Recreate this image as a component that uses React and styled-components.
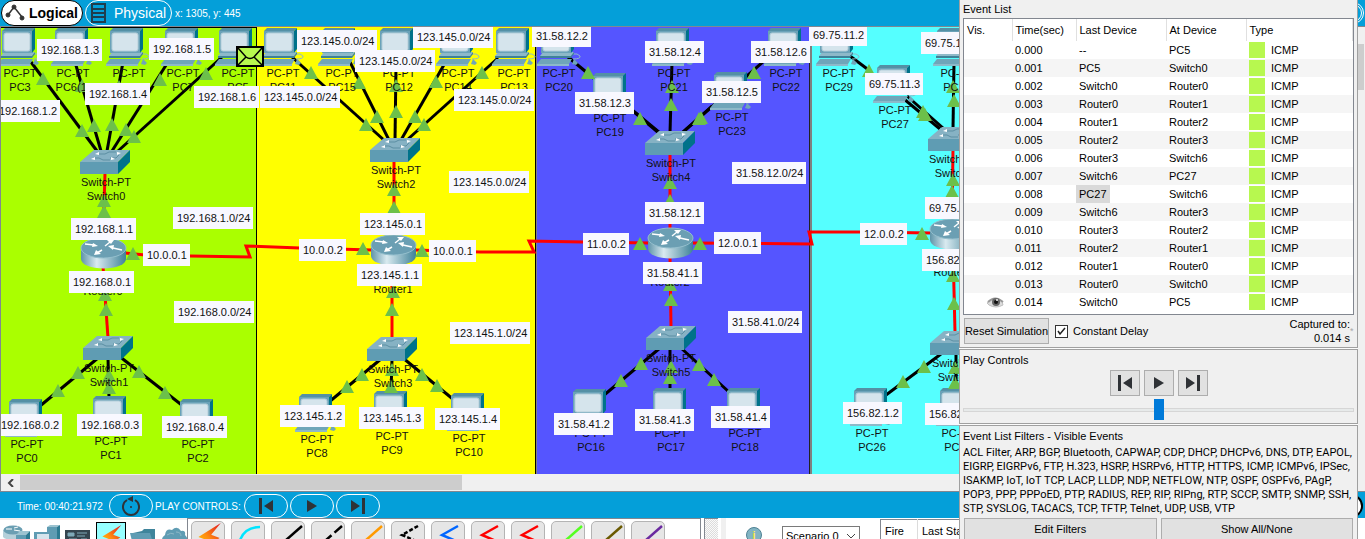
import React from "react";
import styled, { createGlobalStyle } from "styled-components";

const GlobalStyle = createGlobalStyle`
  *, *::before, *::after { box-sizing: border-box; }
  body { margin: 0; background: #f0f0f0; }
  body, button, select, input, table {
    font-family: "Liberation Sans", Arial, sans-serif;
    font-size: 11px;
    color: #000;
  }
  button { padding: 0; cursor: pointer; }
`;

/* ---------- shell ---------- */

const Shell = styled.div`
  position: relative;
  display: flex;
  flex-direction: column;
  height: 100vh;
  overflow: hidden;
`;

const TopBar = styled.header`
  flex: none;
  display: flex;
  align-items: center;
  gap: 2px;
  height: 26px;
  padding: 0 1px;
  background: #049fd9;
`;

const ModeButton = styled.button`
  display: flex;
  align-items: center;
  gap: ${(p) => (p.$active ? "4px" : "8px")};
  height: 26px;
  width: ${(p) => (p.$active ? "82px" : "87px")};
  padding-left: ${(p) => (p.$active ? "3px" : "5px")};
  white-space: nowrap;
  border: 1px solid ${(p) => (p.$active ? "#000" : "#fff")};
  border-radius: 13px;
  background: ${(p) => (p.$active ? "#fff" : "transparent")};
  color: ${(p) => (p.$active ? "#000" : "#fff")};
  font-size: 14px;
  font-weight: ${(p) => (p.$active ? "bold" : "normal")};
`;

const BarText = styled.span`
  color: #fff;
  font-size: 10px;
  white-space: nowrap;
`;

const Coordinates = styled(BarText)`
  padding-left: 1px;
`;

const ClockButton = styled.button`
  width: 32px;
  height: 22px;
  margin-left: auto;
  border: 3px double #fff;
  border-radius: 11px;
  background: transparent;
`;

/* ---------- workspace ---------- */

const Middle = styled.div`
  flex: 1;
  min-height: 0;
  display: flex;
  border-top: 1px solid #828790;
  border-left: 1px solid #828790;
`;

const Viewport = styled.main`
  position: relative;
  flex: 1;
  overflow: hidden;
`;

const Zones = styled.div`
  display: flex;
  height: 100%;
`;

const Zone = styled.section`
  flex: ${(p) => (p.$width ? `0 0 ${p.$width}px` : "1")};
  background: ${(p) => p.$color};
  border-right: ${(p) => p.$edge || "none"};
  border-left: ${(p) => p.$start || "none"};
  border-top: 1px solid ${(p) => p.$top || p.$color};
`;

const Scene = styled.div`
  position: absolute;
  left: -1px;
  top: -27px;
  width: 1400px;
  height: 600px;
`;

const Drawing = styled.svg`
  display: block;
  width: 100%;
  height: 100%;
`;

const NodeName = styled.div`
  position: absolute;
  left: ${(p) => p.$x}px;
  top: ${(p) => p.$y}px;
  width: 80px;
  margin-left: -40px;
  text-align: center;
  line-height: 14px;
  white-space: pre-line;
  color: #111;
`;

const Note = styled.div`
  position: absolute;
  left: ${(p) => p.$x}px;
  top: ${(p) => p.$y}px;
  height: 22px;
  padding: 0 3px 0 4px;
  line-height: 22px;
  white-space: nowrap;
  background: #f8f8ff;
  color: #111;
`;

const VerticalScroll = styled.div`
  flex: none;
  width: 17px;
  padding-top: 17px;
  background: #f0f0f0;
  border-left: 1px solid #fff;
`;

const VerticalThumb = styled.div`
  width: 15px;
  height: 46px;
  background: #cdcdcd;
`;

const HorizontalScroll = styled.div`
  flex: none;
  display: flex;
  height: 18px;
  border: solid #828790;
  border-width: 0 0 1px 1px;
  background: #f0f0f0;
`;

const ScrollArrow = styled.button`
  display: flex;
  align-items: center;
  justify-content: center;
  width: 19px;
  border: 0;
  background: transparent;
`;

const HorizontalThumb = styled.div`
  width: 442px;
  height: 15px;
  margin-top: 1px;
  background: #cdcdcd;
`;

/* ---------- time bar ---------- */

const TimeBar = styled.div`
  flex: none;
  display: flex;
  align-items: center;
  gap: 2px;
  height: 26px;
  padding: 2px 2px 0 17px;
  background: #049fd9;
`;

const TimeText = styled(BarText)`
  width: 90px;
`;

const PlayText = styled(BarText)`
  width: 87px;
`;

const PillButton = styled.button`
  display: flex;
  align-items: center;
  justify-content: center;
  width: 44px;
  height: 24px;
  border: 1px solid #fff;
  border-radius: 12px;
  background: transparent;
`;

const SimulationButton = styled.button`
  height: 24px;
  width: 110px;
  margin-left: auto;
  border: 2px solid #000;
  border-radius: 12px;
  background: #fff;
  font-size: 14px;
  font-weight: bold;
`;

/* ---------- bottom palettes ---------- */

const Bottom = styled.footer`
  flex: none;
  display: flex;
  height: 21px;
  background: #fff;
`;

const Categories = styled.div`
  display: flex;
  gap: 4px;
  width: 187px;
  padding: 4px 0 0 3px;
  border-top: 2px solid #f0f0f0;
`;

const CategoryButton = styled.button`
  width: ${(p) => (p.$active ? "30px" : "27px")};
  height: 30px;
  flex: none;
  margin-top: ${(p) => (p.$active ? "-2px" : "0")};
  border: ${(p) => (p.$active ? "1px solid #000" : "0")};
  background: ${(p) => (p.$active ? "#96ffff" : "transparent")};

  svg { display: block; }
`;

const Connections = styled.div`
  display: flex;
  gap: 6px;
  width: 514px;
  padding: 2px 3px;
  border: solid #828790;
  border-width: 1px 1px 0 1px;
`;

const ConnectionButton = styled.button`
  flex: none;
  width: 34px;
  height: 34px;
  border: 1px solid #b4b4b4;
  border-radius: 5px;
  background: #e6e6e6;

  svg { display: block; }
`;

const Splitter = styled.div`
  width: 14px;
  margin: 0 3px;
  border: 1px solid #828790;
  border-width: 1px 0 0 1px;
  background: repeating-conic-gradient(#dcdcdc 0% 25%, #fafafa 0% 50%) 0 0 / 2px 2px;
`;

const Scenarios = styled.div`
  display: flex;
  align-items: flex-start;
  flex: 1;
  padding-left: 20px;
  border-left: 5px solid #f0f0f0;
`;

const InfoButton = styled.button`
  width: 16px;
  height: 16px;
  margin: 9px 20px 0 0;
  border: 1px solid #4f8294;
  border-radius: 8px;
  background: #82b4c3;
  color: #ffe84a;
  font-weight: bold;
  line-height: 14px;
`;

const SelectBox = styled.label`
  position: relative;
  width: 78px;
  margin: 8px 20px 0 0;

  svg { position: absolute; right: 4px; top: 6px; pointer-events: none; }
`;

const ScenarioSelect = styled.select`
  width: 100%;
  height: 20px;
  padding: 0 3px;
  appearance: none;
  border: 1px solid #7a7a7a;
  border-radius: 0;
  background: #fff;
`;

const PduTable = styled.table`
  margin-top: 1px;
  border-collapse: collapse;
  border: 1px solid #828790;

  th {
    height: 23px;
    padding: 0 4px;
    border-right: 1px solid #dcdcdc;
    text-align: left;
    font-weight: normal;
    white-space: nowrap;
  }

  th:first-child { width: 37px; }
`;

/* ---------- simulation panel ---------- */

const Panel = styled.aside`
  position: absolute;
  top: 0;
  right: 7px;
  bottom: 0;
  display: flex;
  flex-direction: column;
  gap: 1px;
  width: 399px;
  overflow: hidden;
  background: #fcfcfc;
`;

const Group = styled.section`
  flex: none;
  padding: 0 3px;
  border: 1px solid #a0a0a0;
  border-top-width: ${(p) => (p.$first ? "0" : "1px")};
  background: #f0f0f0;
`;

const GroupTitle = styled.h2`
  margin: 0;
  height: ${(p) => (p.$first ? "18px" : "20px")};
  line-height: ${(p) => (p.$first ? "18px" : "20px")};
  font-size: 11px;
  font-weight: normal;
`;

const TableFrame = styled.div`
  height: 297px;
  border: 1px solid #828790;
  background: #fff;
`;

const EventTable = styled.table`
  width: 100%;
  table-layout: fixed;
  border-collapse: collapse;

  th {
    height: 22px;
    padding: 0 0 0 3px;
    border-right: 1px solid #e0e0e0;
    text-align: left;
    font-weight: normal;
  }

  td {
    height: 18px;
    padding: 0 0 0 3px;
    line-height: 18px;
  }

  tbody tr:nth-child(even) { background: #f5f5f5; }
`;

const Selected = styled.span`
  display: inline-block;
  height: 18px;
  margin-left: -3px;
  padding: 0 3px;
  vertical-align: top;
  background: #d9d9d9;
`;

const TypeCell = styled.div`
  display: flex;
  align-items: center;
  gap: 6px;
`;

const Swatch = styled.span`
  width: 16px;
  height: 16px;
  background: #b7f84f;
`;

const EyeBox = styled.div`
  display: flex;
  justify-content: flex-end;
  padding-right: 8px;
`;

const CaptureRow = styled.div`
  display: flex;
  align-items: center;
  height: 32px;
  padding-left: 1px;
`;

const PlainButton = styled.button`
  display: flex;
  align-items: center;
  justify-content: center;
  width: ${(p) => (p.$width ? `${p.$width}px` : "auto")};
  flex: ${(p) => (p.$width ? "none" : "1")};
  height: 26px;
  border: 1px solid #adadad;
  background: #e1e1e1;
  white-space: nowrap;
`;

const DelayLabel = styled.label`
  display: flex;
  align-items: center;
  gap: 5px;
  margin-left: 6px;
`;

const CheckBox = styled.input`
  appearance: none;
  width: 13px;
  height: 13px;
  margin: 0;
  border: 1px solid #333;
  background: #fff;
`;

const CheckWrap = styled.span`
  display: grid;

  > * { grid-area: 1 / 1; }
  svg { pointer-events: none; visibility: hidden; }
  input:checked + svg { visibility: visible; }
`;

const Captured = styled.div`
  margin-left: auto;
  line-height: 14px;
  text-align: right;
`;

const BusyMark = styled.span`
  width: 4px;
  color: #a8a8a8;
  font-size: 9px;
`;

const Transport = styled.div`
  display: flex;
  justify-content: center;
  gap: 4px;
`;

const Speed = styled.input`
  display: block;
  appearance: none;
  width: 100%;
  height: 21px;
  margin: 3px 0;
  background: transparent;

  &::-webkit-slider-runnable-track {
    height: 4px;
    border: 1px solid #d6d6d6;
    background: #e7eaea;
  }

  &::-webkit-slider-thumb {
    appearance: none;
    width: 10px;
    height: 21px;
    margin-top: -10px;
    background: #007ad9;
  }
`;

const FilterList = styled.p`
  margin: 0;
  font-family: Roboto, "Liberation Sans", sans-serif;
  line-height: 14px;
  white-space: pre;
`;

const FilterButtons = styled.div`
  display: flex;
  gap: 4px;
  padding: 2px 1px 4px;

  button { height: 22px; }
`;

/* ---------- data ---------- */

const pcs = [
  [2, 28], [55, 28], [110, 28], [165, 28], [219, 28],
  [264, 28], [322, 28], [380, 28], [440, 28], [496, 28],
  [541, 28], [656, 28], [768, 28], [593, 73], [714, 72],
  [820, 28], [877, 65], [937, 28],
  [9, 399], [93, 396], [180, 399],
  [299, 394], [374, 391], [451, 393],
  [573, 389], [653, 388], [727, 388],
  [854, 388], [940, 388],
];

const switches = [
  [80, 150], [370, 138], [645, 131], [928, 127],
  [83, 336], [367, 337], [646, 326], [930, 331],
];

const routers = [[81, 238], [371, 235], [648, 228], [930, 219]];

const names = [
  ["PC-PT", "PC3", 20, 66], ["PC-PT", "PC6(1)", 73, 66], ["PC-PT", "PC4", 129, 66],
  ["PC-PT", "PC7", 183, 66], ["PC-PT", "PC5", 238, 66],
  ["PC-PT", "PC11", 283, 66], ["PC-PT", "PC15", 342, 66], ["PC-PT", "PC12", 399, 66],
  ["PC-PT", "PC14", 458, 66], ["PC-PT", "PC13", 514, 66],
  ["PC-PT", "PC20", 559, 66], ["PC-PT", "PC21", 674, 66], ["PC-PT", "PC22", 786, 66],
  ["PC-PT", "PC19", 610, 111], ["PC-PT", "PC23", 732, 110],
  ["PC-PT", "PC29", 839, 66], ["PC-PT", "PC27", 895, 103], ["PC-PT", "PC30", 957, 66],
  ["Switch-PT", "Switch0", 106, 175], ["Switch-PT", "Switch2", 396, 163],
  ["Switch-PT", "Switch4", 671, 156], ["Switch-PT", "Switch6", 954, 152],
  ["", "Router0", 103, 284], ["", "Router1", 393, 282],
  ["", "Router2", 670, 275], ["", "Router3", 953, 265],
  ["Switch-PT", "Switch1", 109, 361], ["Switch-PT", "Switch3", 393, 362],
  ["Switch-PT", "Switch5", 671, 351], ["Switch-PT", "Switch7", 957, 356],
  ["PC-PT", "PC0", 27, 437], ["PC-PT", "PC1", 111, 434], ["PC-PT", "PC2", 198, 437],
  ["PC-PT", "PC8", 317, 432], ["PC-PT", "PC9", 392, 429], ["PC-PT", "PC10", 469, 431],
  ["PC-PT", "PC16", 591, 426], ["PC-PT", "PC17", 671, 426], ["PC-PT", "PC18", 745, 426],
  ["PC-PT", "PC26", 872, 426], ["PC-PT", "PC31", 958, 426],
];

const notes = [
  ["192.168.1.3", 37, 39], ["192.168.1.5", 149, 38], ["192.168.1.4", 85, 83],
  ["192.168.1.6", 194, 86], ["192.168.1.2", -5, 100], ["192.168.1.1", 71, 218],
  ["192.168.1.0/24", 173, 207], ["192.168.0.1", 69, 271], ["192.168.0.0/24", 174, 301],
  ["10.0.0.1", 143, 244], ["192.168.0.2", -3, 414], ["192.168.0.3", 77, 414],
  ["192.168.0.4", 162, 416],
  ["123.145.0.0/24", 297, 30], ["123.145.0.0/24", 413, 26], ["123.145.0.0/24", 355, 50],
  ["123.145.0.0/24", 260, 86], ["123.145.0.0/24", 454, 89], ["123.145.0.0/24", 449, 171],
  ["123.145.0.1", 360, 213], ["10.0.0.2", 299, 239], ["10.0.0.1", 429, 240],
  ["123.145.1.1", 357, 264], ["123.145.1.0/24", 450, 322],
  ["123.145.1.2", 280, 405], ["123.145.1.3", 359, 407], ["123.145.1.4", 435, 408],
  ["31.58.12.2", 532, 25], ["31.58.12.4", 645, 41], ["31.58.12.6", 751, 41],
  ["31.58.12.3", 575, 92], ["31.58.12.5", 702, 81], ["31.58.12.0/24", 732, 162],
  ["31.58.12.1", 645, 202], ["11.0.0.2", 583, 233], ["12.0.0.1", 714, 232],
  ["31.58.41.1", 643, 262], ["31.58.41.0/24", 728, 311],
  ["31.58.41.2", 554, 413], ["31.58.41.3", 635, 409], ["31.58.41.4", 711, 406],
  ["69.75.11.2", 809, 24], ["69.75.11.4", 921, 32], ["69.75.11.3", 865, 73],
  ["69.75.11.1", 925, 197], ["12.0.0.2", 860, 223], ["156.82.1.1", 922, 249],
  ["156.82.1.2", 843, 402], ["156.82.1.3", 925, 403],
];

const copper = [
  "31,62 97,151", "75,62 101,151", "123,62 107,151", "168,62 112,151", "222,57 118,151",
  "292,57 385,141", "350,62 389,140", "396,66 395,140", "445,63 401,140", "498,58 407,140",
  "568,57 660,133", "620,100 660,134", "672,62 670,133", "765,60 682,133", "712,106 683,132",
  "850,56 870,71", "907,96 943,128", "904,99 940,129", "954,62 953,129",
  "98,358 40,406", "108,358 109,398", "119,356 183,406",
  "381,359 329,402", "392,360 391,392", "403,358 454,400",
  "660,348 603,396", "670,350 670,390", "681,348 729,392",
  "941,354 886,395", "956,354 956,390",
];

const serial = [
  "105,173 103,240", "103,266 108,338", "394,161 394,237", "392,262 392,339",
  "670,154 670,230", "670,257 671,328", "953,150 952,221", "953,248 955,332",
  "125,253 145,255 190,256 250,257 246,246 300,248 372,250",
  "415,250 480,252 534,252 529,241 583,242 650,243",
  "692,243 812,244 809,232 860,232 932,233",
];

const lights = [
  [43, 79], [82, 131], [82, 86], [94, 126], [119, 87], [112, 125], [160, 80], [126, 130],
  [206, 74], [134, 137], [104, 201], [104, 212], [105, 295], [106, 310], [133, 254],
  [78, 373], [58, 391], [109, 376], [109, 388], [139, 372], [165, 393],
  [311, 73], [366, 125], [359, 83], [377, 117], [396, 86], [396, 112], [436, 82],
  [415, 117], [482, 73], [424, 125], [394, 190], [394, 208], [393, 292], [392, 310],
  [363, 249], [422, 251], [362, 375], [347, 387], [392, 370], [391, 387], [422, 375],
  [437, 386],
  [588, 73], [640, 119], [672, 87], [671, 105], [754, 73], [701, 118], [699, 119],
  [670, 183], [670, 201], [640, 244], [700, 244], [670, 285], [671, 300],
  [641, 364], [621, 381], [671, 367], [670, 378], [699, 365], [714, 380],
  [869, 71], [923, 112], [925, 115], [953, 87], [954, 101], [953, 180], [952, 192],
  [922, 234], [953, 276], [954, 304], [924, 367], [903, 382], [955, 368], [955, 383],
];

const events = [
  ["0.000", "--", "PC5"], ["0.001", "PC5", "Switch0"], ["0.002", "Switch0", "Router0"],
  ["0.003", "Router0", "Router1"], ["0.004", "Router1", "Router2"],
  ["0.005", "Router2", "Router3"], ["0.006", "Router3", "Switch6"],
  ["0.007", "Switch6", "PC27"], ["0.008", "PC27", "Switch6"],
  ["0.009", "Switch6", "Router3"], ["0.010", "Router3", "Router2"],
  ["0.011", "Router2", "Router1"], ["0.012", "Router1", "Router0"],
  ["0.013", "Router0", "Switch0"], ["0.014", "Switch0", "PC5"],
];

const filters = `ACL Filter, ARP, BGP, Bluetooth, CAPWAP, CDP, DHCP, DHCPv6, DNS, DTP, EAPOL,
EIGRP, EIGRPv6, FTP, H.323, HSRP, HSRPv6, HTTP, HTTPS, ICMP, ICMPv6, IPSec,
ISAKMP, IoT, IoT TCP, LACP, LLDP, NDP, NETFLOW, NTP, OSPF, OSPFv6, PAgP,
POP3, PPP, PPPoED, PTP, RADIUS, REP, RIP, RIPng, RTP, SCCP, SMTP, SNMP, SSH,
STP, SYSLOG, TACACS, TCP, TFTP, Telnet, UDP, USB, VTP`;

/* ---------- drawings ---------- */

const Pc = ({ x, y }) => (
  <g transform={`translate(${x} ${y})`}>
    <path d="M32 31 Q40 31 39 28 Q37 25 31 26" fill="none" stroke="#8fb9c8" />
    <path d="M-4 36 L0 31 H31 L28 36 Z" fill="#6fa5b9" />
    <path d="M-4 36 H28 V38 H-4 Z" fill="#8db9c9" />
    <path d="M31 36 L33 31 L37 35 L35 37 Z" fill="#6fa5b9" />
    <path d="M-1 28 L2 24 H33 L30 28 Z" fill="#8db9c9" />
    <path d="M-1 28 H30 L33 24 V26 L30 30 H-1 Z" fill="#3f8298" />
    <path d="M0 3 L3 0 H33 L30 3 Z" fill="#5490a5" />
    <path d="M30 3 L33 0 V21 L30 25 Z" fill="#00728a" />
    <rect x="0" y="3" width="30" height="22" fill="#6aa2b8" />
    <rect x="2" y="5" width="26" height="18" rx="2" fill="#d5e4ec" stroke="#b4ced9" />
  </g>
);

const SwitchIcon = ({ x, y }) => (
  <g transform={`translate(${x} ${y})`}>
    <path d="M0 12 L14 0 H50 L38 12 Z" fill="#86b2c4" />
    <path d="M0 12 H38 V24 H0 Z" fill="#5f9cb3" />
    <path d="M38 12 L50 0 V12 L38 24 Z" fill="#00728a" />
    <path d="M19 4 H25 L29 2 H36 M13 8 H19 L23 10 H30 M30 8 H36 L39 5" fill="none" stroke="#5c8fa3" />
    <path d="M15 4 l4 -2 v3 z M41 3 l-4 -1 v3 z M11 9 l4 -2 v3 z M35 9 l-4 -2 v3 z" fill="#fff" />
  </g>
);

const RouterIcon = ({ x, y }) => (
  <g transform={`translate(${x} ${y})`}>
    <path d="M0 10 V21 A22.500 9.500 0 0 0 45 21 V10 Z" fill="url(#routerBody)" />
    <ellipse cx="22.500" cy="10" rx="22.500" ry="10" fill="#6b9fb3" stroke="#94bfcd" />
    <g stroke="#fff" strokeWidth="1.500" fill="#fff">
      <path d="M4 6 L13 7" />
      <path d="M12 5 L17 8 L11 9 Z" stroke="none" />
      <path d="M41 12 L32 10" />
      <path d="M33 7 L27 8 L32 12 Z" stroke="none" />
      <path d="M24 8 L29 4" />
      <path d="M26 2 L33 2 L30 6 Z" stroke="none" />
      <path d="M21 12 L16 15" />
      <path d="M15 12 L13 17 L20 16 Z" stroke="none" />
    </g>
  </g>
);

const PrevIcon = () => (
  <svg width="16" height="16" viewBox="0 0 16 16" fill="#2f3236">
    <path d="M1 0 H4 V16 H1 Z M15 2 V14 L6 8 Z" />
  </svg>
);

const PlayIcon = () => (
  <svg width="16" height="16" viewBox="0 0 16 16" fill="#2f3236">
    <path d="M3 2 V14 L13 8 Z" />
  </svg>
);

const NextIcon = () => (
  <svg width="16" height="16" viewBox="0 0 16 16" fill="#2f3236">
    <path d="M12 0 H15 V16 H12 Z M1 2 V14 L10 8 Z" />
  </svg>
);

const Bolt = ({ size }) => (
  <svg width={size} height={size} viewBox="0 0 30 30">
    <defs>
      <linearGradient id="bolt" x1="0" y1="1" x2="1" y2="0">
        <stop offset="0" stopColor="#ffe000" />
        <stop offset=".5" stopColor="#ff8a10" />
        <stop offset="1" stopColor="#e01020" />
      </linearGradient>
    </defs>
    <path d="M27 1 L6 14 L14 17 L4 28 L26 15 L18 12 Z" fill="url(#bolt)" />
  </svg>
);

const Line = ({ d, color, dash }) => (
  <svg width="32" height="32" viewBox="0 0 32 32">
    <path d={d} fill="none" stroke={color} strokeWidth="2.500" strokeDasharray={dash} />
  </svg>
);

const diagonal = "M30 4 L5 26";
const zigzag = "M26 4 L10 13 L24 19";

const connections = [
  ["Automatic", null],
  ["Console", { d: "M28 5 Q8 5 6 28", color: "#00e5ff" }],
  ["Straight-through", { d: diagonal, color: "#000" }],
  ["Cross-over", { d: diagonal, color: "#000", dash: "10 4" }],
  ["Fiber", { d: diagonal, color: "#ff9a00" }],
  ["Phone", { d: zigzag, color: "#000", dash: "4 2" }],
  ["Coaxial", { d: zigzag, color: "#0066ff" }],
  ["Serial DCE", { d: zigzag, color: "#ff0000" }],
  ["Serial DTE", { d: zigzag, color: "#ff0000" }],
  ["Octal", { d: diagonal, color: "#55ff22" }],
  ["IoT cable", { d: diagonal, color: "#6a5a00" }],
  ["USB", { d: diagonal, color: "#6a2aa0" }],
];

const categoryIcons = [
  ["Network devices", (
    <svg width="27" height="28" viewBox="0 0 27 28">
      <path d="M0 5 V12 A10 4 0 0 0 19 12 V5 Z" fill="#b5d0da" />
      <ellipse cx="10" cy="5" rx="9.500" ry="4.500" fill="#6b9fb3" />
      <path d="M3 4 L9 4 M11 5 L17 6 M11 3 L15 2" stroke="#fff" />
      <path d="M13 10 L17 6 H27 L23 10 Z" fill="#9cc3d0" />
      <path d="M13 10 H23 V28 H13 Z" fill="#5f9cb3" />
      <path d="M23 10 L27 6 V28 H23 Z" fill="#2c7a91" />
    </svg>
  )],
  ["End devices", (
    <svg width="27" height="28" viewBox="0 0 27 28">
      <path d="M13 2 L16 0 H26 L23 2 Z" fill="#9cc3d0" />
      <path d="M13 2 H23 V28 H13 Z" fill="#5f9cb3" />
      <path d="M23 2 L26 0 V28 H23 Z" fill="#2c7a91" />
      <path d="M0 7 H17 V20 H0 Z" fill="#5f9cb3" />
      <path d="M3 9 H15 V18 H3 Z" fill="#d5e4ec" />
    </svg>
  )],
  ["Components", (
    <svg width="27" height="28" viewBox="0 0 27 28">
      <path d="M0 5 H25 V26 H0 Z" fill="#34454f" />
      <path d="M3 8 H9 V11 H3 Z M12 8 H22 M12 11 H20 M4 14 H12 M16 14 H22" fill="#7fa9b8" stroke="#7fa9b8" />
    </svg>
  )],
  ["Connections", <Bolt size={27} />],
  ["Miscellaneous", (
    <svg width="27" height="28" viewBox="0 0 27 28">
      <path d="M3 8 L12 6 L14 4 H25 V22 H3 Z" fill="#3f849b" />
      <path d="M0 8 H20 L25 24 H4 Z" fill="#5f9cb3" />
    </svg>
  )],
  ["Multiuser", (
    <svg width="27" height="28" viewBox="0 0 27 28">
      <path d="M4 19 Q-2 14 4 10 Q5 3 11 5 Q16 0 20 6 Q25 5 24 10 Q29 15 24 19 Z" fill="#5f9cb3" />
      <path d="M6 10 Q10 7 13 9 M15 7 Q20 7 20 11" stroke="#8fb9c8" fill="none" />
    </svg>
  )],
];

const Eye = () => (
  <svg width="17" height="18" viewBox="0 0 17 18">
    <path d="M0 10 Q6 4 12 6 Q16 8 16 12 Q9 16 2 12 Z" fill="#dcdcdc" stroke="#c0c0c0" />
    <path d="M1 9 Q8 2 16 9" fill="none" stroke="#999" strokeWidth="2" />
    <circle cx="9" cy="9" r="4" fill="#666" />
    <circle cx="9" cy="9" r="2" fill="#111" />
    <circle cx="10" cy="7" r="1" fill="#eee" />
  </svg>
);

/* ---------- sections ---------- */

const NetworkMap = () => (
  <Viewport>
    <Zones>
      <Zone $width={256} $color="#aaff00" $edge="1px solid #000" $top="#000" />
      <Zone $width={279} $color="#ffff00" $edge="1px solid #000" />
      <Zone $width={274} $color="#5555ff" $start="1px solid #808080" $edge="1px solid #222" />
      <Zone $color="#55ffff" $start="2px solid #808080" />
    </Zones>
    <Scene>
      <Drawing>
        <defs>
          <linearGradient id="routerBody">
            <stop offset="0" stopColor="#5f94a8" />
            <stop offset=".35" stopColor="#d9eaf0" />
            <stop offset="1" stopColor="#3f8298" />
          </linearGradient>
        </defs>
        {copper.map((p) => (
          <polyline key={p} points={p} fill="none" stroke="#000" strokeWidth="3" />
        ))}
        {serial.map((p) => (
          <polyline key={p} points={p} fill="none" stroke="#f00" strokeWidth="3" />
        ))}
        {pcs.map(([x, y]) => <Pc key={`${x}-${y}`} x={x} y={y} />)}
        {switches.map(([x, y]) => <SwitchIcon key={`${x}-${y}`} x={x} y={y} />)}
        {routers.map(([x, y]) => <RouterIcon key={`${x}-${y}`} x={x} y={y} />)}
        {lights.map(([x, y]) => (
          <path key={`${x}-${y}`} d={`M${x} ${y - 7} l7 13 h-14 z`} fill="#6cc04a" />
        ))}
        <g stroke="#000" strokeWidth="2" fill="#b7f84f">
          <path d="M237 47 H263 V66 H237 Z" />
          <path d="M238 48 L246 57 Q250 60 254 57 L262 48 M238 65 L246 57 M262 65 L254 57" fill="none" strokeWidth="1.500" />
        </g>
      </Drawing>
      {names.map(([kind, name, x, y]) => (
        <NodeName key={name} $x={x} $y={y}>{kind ? `${kind}\n${name}` : name}</NodeName>
      ))}
      {notes.map(([text, x, y]) => (
        <Note key={`${x}-${y}`} $x={x} $y={y}>{text}</Note>
      ))}
    </Scene>
  </Viewport>
);

const SimulationPanel = () => (
  <Panel>
    <Group $first>
      <GroupTitle $first>Event List</GroupTitle>
      <TableFrame>
        <EventTable>
          <colgroup>
            <col width="48" /><col width="64" /><col width="90" /><col width="80" /><col />
          </colgroup>
          <thead>
            <tr><th>Vis.</th><th>Time(sec)</th><th>Last Device</th><th>At Device</th><th>Type</th></tr>
          </thead>
          <tbody>
            {events.map(([time, last, at]) => (
              <tr key={time}>
                <td>{time === "0.014" && <EyeBox><Eye /></EyeBox>}</td>
                <td>{time}</td>
                <td>{time === "0.008" ? <Selected>{last}</Selected> : last}</td>
                <td>{at}</td>
                <td><TypeCell><Swatch />ICMP</TypeCell></td>
              </tr>
            ))}
          </tbody>
        </EventTable>
      </TableFrame>
      <CaptureRow>
        <PlainButton $width={85}>Reset Simulation</PlainButton>
        <DelayLabel>
          <CheckWrap>
            <CheckBox type="checkbox" defaultChecked />
            <svg width="13" height="13" viewBox="0 0 13 13">
              <path d="M3 6 L5 9 L10 3" fill="none" stroke="#222" strokeWidth="1.500" />
            </svg>
          </CheckWrap>
          Constant Delay
        </DelayLabel>
        <Captured>Captured to:<br />0.014 s</Captured>
        <BusyMark>*</BusyMark>
      </CaptureRow>
    </Group>
    <Group>
      <GroupTitle>Play Controls</GroupTitle>
      <Transport>
        <PlainButton $width={30} aria-label="Back"><PrevIcon /></PlainButton>
        <PlainButton $width={30} aria-label="Play"><PlayIcon /></PlainButton>
        <PlainButton $width={30} aria-label="Forward"><NextIcon /></PlainButton>
      </Transport>
      <Speed type="range" aria-label="Play speed" defaultValue="50" />
    </Group>
    <Group>
      <GroupTitle>Event List Filters - Visible Events</GroupTitle>
      <FilterList>{filters}</FilterList>
      <FilterButtons>
        <PlainButton>Edit Filters</PlainButton>
        <PlainButton>Show All/None</PlainButton>
      </FilterButtons>
    </Group>
  </Panel>
);

export default function App() {
  return (
    <Shell>
      <GlobalStyle />
      <TopBar>
        <ModeButton $active>
          <svg width="20" height="20" viewBox="0 0 20 20" fill="#333" stroke="#333">
            <path d="M3 12 L9 4 L17 14" fill="none" strokeWidth="1.500" />
            <circle cx="3" cy="12" r="2" /><circle cx="9" cy="4" r="2" /><circle cx="17" cy="15" r="2" />
          </svg>
          Logical
        </ModeButton>
        <ModeButton>
          <svg width="15" height="20" viewBox="0 0 15 20" fill="none" stroke="#1f3d4d" strokeWidth="2">
            <path d="M1 1 H14 V19 H1 Z M1 6 H14 M1 10 H14 M1 14 H14" />
          </svg>
          Physical
        </ModeButton>
        <Coordinates>x: 1305, y: 445</Coordinates>
        <ClockButton aria-label="Environment time" />
      </TopBar>
      <Middle>
        <NetworkMap />
        <VerticalScroll><VerticalThumb /></VerticalScroll>
      </Middle>
      <HorizontalScroll>
        <ScrollArrow aria-label="Scroll left">
          <svg width="8" height="8" viewBox="0 0 8 8">
            <path d="M6 0 L2 4 L6 8" fill="none" stroke="#444" strokeWidth="2" />
          </svg>
        </ScrollArrow>
        <HorizontalThumb />
      </HorizontalScroll>
      <TimeBar>
        <TimeText>Time: 00:40:21.972</TimeText>
        <PillButton aria-label="Power cycle devices">
          <svg width="20" height="20" viewBox="0 0 20 20" fill="none" stroke="#2f3236" strokeWidth="2">
            <path d="M14 4 A8 8 0 1 1 6 4" />
            <path d="M6 3 L12 0 V6 Z" fill="#2f3236" stroke="none" />
            <circle cx="10" cy="11" r="1" fill="#2f3236" stroke="none" />
          </svg>
        </PillButton>
        <PlayText>PLAY CONTROLS:</PlayText>
        <PillButton aria-label="Back"><PrevIcon /></PillButton>
        <PillButton aria-label="Play"><PlayIcon /></PillButton>
        <PillButton aria-label="Forward"><NextIcon /></PillButton>
        <SimulationButton>Simulation</SimulationButton>
      </TimeBar>
      <Bottom>
        <Categories>
          {categoryIcons.map(([label, icon]) => (
            <CategoryButton key={label} aria-label={label} $active={label === "Connections"}>{icon}</CategoryButton>
          ))}
        </Categories>
        <Connections>
          {connections.map(([label, line]) => (
            <ConnectionButton key={label} aria-label={label}>
              {line ? <Line {...line} /> : <Bolt size={32} />}
            </ConnectionButton>
          ))}
        </Connections>
        <Splitter />
        <Scenarios>
          <InfoButton>i</InfoButton>
          <SelectBox>
            <ScenarioSelect aria-label="Scenario">
              <option>Scenario 0</option>
            </ScenarioSelect>
            <svg width="9" height="9" viewBox="0 0 9 9">
              <path d="M0 2 L4 6 L8 2" fill="none" stroke="#444" />
            </svg>
          </SelectBox>
          <PduTable>
            <thead><tr><th>Fire</th><th>Last Status</th></tr></thead>
          </PduTable>
        </Scenarios>
      </Bottom>
      <SimulationPanel />
    </Shell>
  );
}
